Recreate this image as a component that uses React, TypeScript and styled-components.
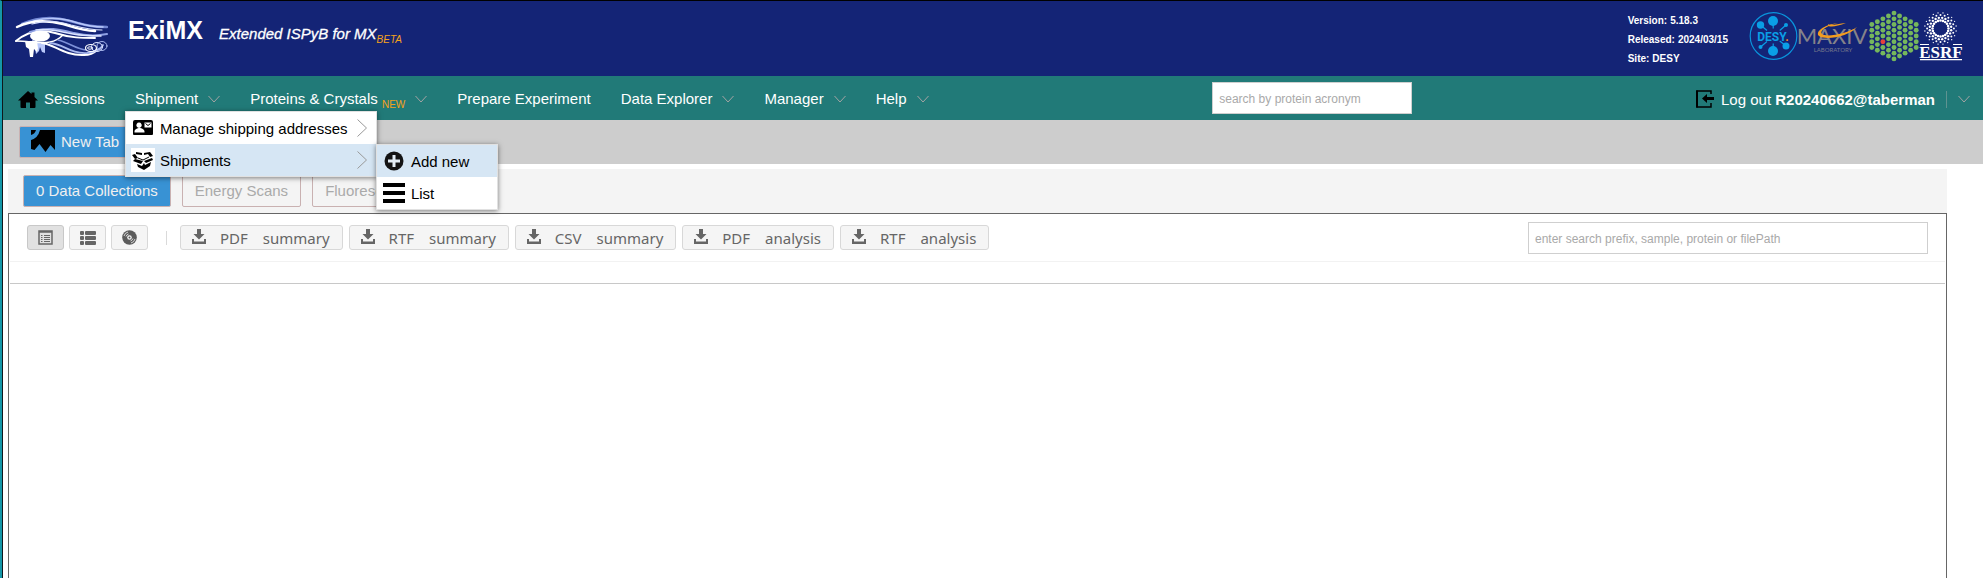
import React from "react";
import styled, { createGlobalStyle, css } from "styled-components";

const Global = createGlobalStyle`
  *, *::before, *::after { box-sizing: border-box; }
  body { margin: 0; background: #fff; }
  body, button, input { font-family: "Liberation Sans", Arial, sans-serif; font-size: 15px; }
  svg { display: block; flex: none; }
`;

const Page = styled.div`
  min-height: 100vh;
  display: flex;
  flex-direction: column;
  border-left: 2px solid #1597a8;
  border-top: 1px solid #000;
  box-shadow: inset 1px 0 #10181c;
  padding-left: 1px;
`;

const Header = styled.header`
  height: 75px;
  background: #142476;
  color: #fff;
  display: flex;
  align-items: flex-start;
  justify-content: space-between;
  padding: 8px 20px 0 9px;
`;

const Brand = styled.div`
  display: flex;
  align-items: flex-start;
`;

const Title = styled.h1`
  margin: 7px 0 0 20px;
  font-size: 25px;
  line-height: 29px;
`;

const Tagline = styled.p`
  margin: 15px 0 0 16px;
  font-style: italic;
  line-height: 20px;
  -webkit-text-stroke: 0.3px #fff;
`;

const Flag = styled.sub`
  font-size: 10px;
  line-height: 0;
  color: #f5a21b;
  -webkit-text-stroke: 0;
`;

const HeaderInfo = styled.div`
  display: flex;
`;

const Release = styled.dl`
  margin: 2px 21px 0 0;
  font-size: 10px;
  font-weight: bold;
  line-height: 19px;
  div { display: flex; gap: 3px; }
  dd { margin: 0; }
`;

const Nav = styled.nav`
  height: 44px;
  background: #217a78;
  color: #fff;
  display: flex;
  align-items: center;
  justify-content: space-between;
  padding: 0 13px 0 15px;
`;

const NavList = styled.ul`
  display: flex;
  gap: 30px;
  list-style: none;
  margin: 0;
  padding: 2px 0 0;
`;

const NavItem = styled.li`
  position: relative;
`;

const plain = css`
  border: 0;
  padding: 0;
  background: none;
  color: inherit;
  cursor: pointer;
`;

const NavButton = styled.button`
  ${plain}
  display: flex;
  align-items: center;
  gap: 10px;
  line-height: 20px;
  white-space: nowrap;
`;

const HomeLink = styled.a`
  display: flex;
  align-items: center;
  gap: 6px;
  color: inherit;
  text-decoration: none;
  line-height: 20px;
`;

const Menu = styled.ul<{ $sub?: boolean }>`
  position: absolute;
  z-index: 2;
  top: ${(p) => (p.$sub ? "0" : "22px")};
  left: ${(p) => (p.$sub ? "100%" : "-10px")};
  width: ${(p) => (p.$sub ? "122px" : "252px")};
  margin: 0;
  padding: 0;
  list-style: none;
  background: #fff;
  color: #000;
  border: 1px solid #e1e1e1;
  box-shadow: 0 1px 5px rgba(0, 0, 0, 0.5);
`;

const MenuItem = styled.li`
  position: relative;
`;

const MenuButton = styled.button<{ $active?: boolean }>`
  ${plain}
  width: 100%;
  height: 32px;
  display: flex;
  align-items: center;
  gap: 5px;
  padding: 0 8px 0 5px;
  background: ${(p) => (p.$active ? "#d6e6f4" : "#fff")};
  white-space: nowrap;
  > :nth-child(3) { margin-left: auto; }
`;

const Field = styled.input<{ $wide?: boolean }>`
  width: ${(p) => (p.$wide ? "400px" : "200px")};
  height: 32px;
  padding: 2px 6px 0;
  border: 1px solid #cfcfcf;
  border-radius: 0;
  font-size: 12px;
  &::placeholder { color: #a9a9a9; opacity: 1; }
`;

const Account = styled.div`
  display: flex;
  align-items: center;
  gap: 11px;
  padding-top: 2px;
`;

const LogoutButton = styled.button`
  ${plain}
  display: flex;
  align-items: center;
  gap: 7px;
`;

const Divider = styled.span<{ $light?: boolean }>`
  width: 1px;
  height: ${(p) => (p.$light ? "14px" : "17px")};
  margin: ${(p) => (p.$light ? "0 8px 0 13px" : "0")};
  background: ${(p) => (p.$light ? "#dadada" : "#5f9391")};
`;

const TabBar = styled.div`
  height: 44px;
  background: #cdcdcd;
  padding: 6px 16px;
`;

const Tab = styled.button<{ $kind: "workspace" | "active" | "muted" }>`
  height: 32px;
  display: flex;
  align-items: center;
  gap: 5px;
  border: 1px solid #c9b1b1;
  border-radius: 2px;
  padding: ${(p) => (p.$kind === "workspace" ? "0 10px 2px" : "0 12px 2px")};
  background: ${(p) => (p.$kind === "muted" ? "#f4f4f4" : "#3892d4")};
  color: ${(p) => (p.$kind === "muted" ? "#aaa" : "#f0f0f0")};
  white-space: nowrap;
`;

const Main = styled.main`
  flex: 1;
  display: flex;
  flex-direction: column;
  margin: 5px 36px 0 5px;
`;

const ResultTabs = styled.div`
  height: 44px;
  background: #f4f4f4;
  display: flex;
  gap: 11px;
  padding: 6px 15px;
`;

const Panel = styled.section`
  flex: 1;
  border: 1px solid #666;
  border-bottom: 0;
  padding: 0 1px;
`;

const Toolbar = styled.div`
  height: 48px;
  display: flex;
  justify-content: space-between;
  border-bottom: 1px solid #f2f2f2;
  padding: 8px 17px 0;
`;

const Tools = styled.div`
  display: flex;
  align-items: center;
  height: 31px;
  gap: 5px;
`;

const ToolButton = styled.button<{ $square?: boolean; $pressed?: boolean }>`
  height: 25px;
  display: flex;
  align-items: center;
  justify-content: center;
  gap: 15px;
  min-width: ${(p) => (p.$square ? "37px" : "0")};
  padding: ${(p) => (p.$square ? "0" : "0 12px 0 10px")};
  border: 1px solid ${(p) => (p.$pressed ? "#c8c8c8" : "#d8d8d8")};
  border-radius: 3px;
  background: ${(p) => (p.$pressed ? "#e1e1e1" : "#f5f5f5")};
  color: #666;
  font-family: "Noto Sans", sans-serif;
  line-height: 22px;
  white-space: nowrap;
`;

const Exports = styled.div`
  display: flex;
  gap: 6px;
  svg { margin: 0 -2px 2px 0; }
`;

const GridHead = styled.div`
  height: 22px;
  border-bottom: 1px solid #c8c8c8;
`;

const Chevron = () => (
  <svg width="12" height="8" viewBox="0 0 12 8" fill="none" stroke="#a3a3a3" strokeWidth="1">
    <path d="M.5 1 6 7l5.500-6" />
  </svg>
);

const Arrow = () => (
  <svg width="12" height="18" viewBox="0 0 12 18" fill="none" stroke="#999">
    <path d="M1.500.5 10.500 9l-9 8.500" />
  </svg>
);

const EyeLogo = () => (
  <svg width="96" height="50" viewBox="0 0 96 50" fill="none" strokeLinecap="round">
    <path d="M20 31l3 8 1 6 3-3 1-4 2 5 3 1V34z" fill="#b9c8fa" />
    <path d="M13 32l1 6 3 2 1 8h3l1-8 3 3 1-4-1-7z" fill="#fff" />
    <path d="M10 15C28 7 44 8 58 12s22 6 37 6" stroke="#7488d4" strokeWidth="2.500" />
    <path d="M22 12c18-5 32-2 44 2 10 3 17 4 25 4" stroke="#b9c8fa" strokeWidth="1.500" />
    <path d="M5 18C19 11 36 11 51 15c13 4 20 7 32 7" stroke="#fff" strokeWidth="2.500" />
    <path d="M20 15C34 11 45 12 59 16c12 3 20 5 31 5" stroke="#dbe3ff" strokeWidth="1.200" />
    <path d="M4 32C16 22 30 20 43 24c16 5 27 5 40 5" stroke="#fff" strokeWidth="2" />
    <path d="M18 23c18-6 32-2 44 1 12 3 23 3 33 1" stroke="#8fa1e4" strokeWidth="2" />
    <path d="M24 21c15-2 25 2 37 4 11 2 18 2 28 2" stroke="#dbe3ff" strokeWidth="1.500" />
    <path d="M4 32c14 0 22 3 34 1 6-1 10-4 13-7" stroke="#fff" strokeWidth="1.500" />
    <ellipse cx="28" cy="27" rx="10" ry="5.500" fill="#fff" />
    <path d="M30 34c12 1 22 13 42 12 6 0 10-2 13-5" stroke="#fff" strokeWidth="2" />
    <path d="M38 34c14 1 20 11 37 10 8-1 14-4 16-8" stroke="#a9b8ee" strokeWidth="1.800" />
    <path d="M46 31c12 3 18 9 28 10" stroke="#7d90d8" strokeWidth="1.500" />
    <ellipse cx="79" cy="39" rx="5.500" ry="3.500" stroke="#fff" strokeWidth="1.200" />
    <ellipse cx="78" cy="39" rx="2.500" ry="1.200" stroke="#fff" />
    <ellipse cx="85" cy="38" rx="5.500" ry="4.500" stroke="#dbe3ff" />
    <ellipse cx="90" cy="37" rx="5" ry="4.500" stroke="#a9b8ee" />
  </svg>
);

const desySpokes = [
  [24, 9, 5], [11.500, 13, 3.700], [37, 13, 2], [11.500, 35, 2], [37, 34, 3.500], [24, 39, 5],
];

const DesyLogo = () => (
  <svg width="49" height="56" viewBox="0 -3 49 56">
    <circle cx="24.500" cy="24" r="23.300" fill="none" stroke="#0a94dc" strokeWidth="1.200" />
    {desySpokes.map(([x, y, r]) => (
      <g key={`${x}-${y}`}>
        <path d={`M${x} ${y}L${24.5 + (x - 24.5) * 0.5} ${24 + (y - 24) * 0.5}`} stroke="#0a9fe6" strokeWidth="1.200" />
        <circle cx={x} cy={y} r={r} fill="#0a9fe6" />
      </g>
    ))}
    <text x="24" y="28.500" textAnchor="middle" fontFamily="Roboto, sans-serif" fontWeight="700" fontSize="12" fill="#0a9fe6">
      DESY<tspan fill="#f28e1c">.</tspan>
    </text>
  </svg>
);

const MaxIvLogo = () => (
  <svg width="71" height="56" viewBox="0 0 71 56">
    <text x="34" y="35" textAnchor="middle" fontFamily="Lato, sans-serif" fontWeight="400" fontSize="22" fill="#85838a">MAXIV</text>
    <text x="35" y="43" textAnchor="middle" fontFamily="Lato, sans-serif" fontSize="6" fill="#77788c">LABORATORY</text>
    <path d="M40 14C25 16 17 23 21 27c7 5 31 0 38-9-9 6-30 11-35 7-3-3 4-8 16-11z" fill="#f39c1f" />
    <path d="M30 15c-1 4 8 3 18-1-9 1-16 3-18 1z" fill="#f39c1f" />
  </svg>
);

const hexDots = Array.from({ length: 9 }, (_, i) => i - 4).flatMap((col) => {
  const count = 9 - Math.abs(col);
  return Array.from({ length: count }, (_, row) => ({ col, row: row - (count - 1) / 2 }));
});

const HexLogo = () => (
  <svg width="50" height="56" viewBox="0 0 50 56">
    {hexDots.map(({ col, row }) => (
      <circle key={`${col}:${row}`} cx={25 + col * 5.55} cy={27 + row * 5.72} r="2.450" fill={col === -2 && row === 1 ? "#e8413c" : "#76b75c"} />
    ))}
  </svg>
);

const rays = Array.from({ length: 20 }, (_, i) => (i * Math.PI) / 10);
const rings = [[8, 1.3], [10.8, 1.2], [13.400, 1], [15.800, 0.7]];

const EsrfLogo = () => (
  <svg width="44" height="56" viewBox="0 0 44 56" fill="#fff">
    {rings.flatMap(([radius, size], ring) =>
      rays.map((a) => {
        const angle = a + (ring % 2 ? Math.PI / 20 : 0);
        return <circle key={`${ring}:${a}`} cx={21.5 + Math.cos(angle) * radius} cy={19.5 + Math.sin(angle) * radius} r={size} />;
      })
    )}
    <path d="M1 35h9v1H1zM34 35h9v1h-9zM1 50h42v1.200H1z" />
    <text x="22" y="49" textAnchor="middle" fontFamily="Liberation Serif, serif" fontWeight="700" fontSize="17">ESRF</text>
  </svg>
);

const HomeIcon = () => (
  <svg width="20" height="17" viewBox="0 0 20 17">
    <path d="M10 0l3.500 3V1.500h3V6L20 9.500h-2.500V16q0 1-1 1H12v-5.500H8V17H3.500q-1 0-1-1V9.500H0z" />
  </svg>
);

const LogoutIcon = () => (
  <svg width="18" height="18" viewBox="0 0 18 18" fill="none" stroke="#000" strokeWidth="1.500">
    <path d="M15 4V1H1v16h14v-4" />
    <path d="M1 .5v17" strokeWidth="2" />
    <path d="M6 8.500l5-4.500v3h7v3h-7v3z" fill="#000" stroke="none" />
  </svg>
);

const CardIcon = () => (
  <svg width="24" height="24" viewBox="0 0 24 24">
    <path fillRule="evenodd" d="M4 4h16q2 0 2 2v12q0 1-1 1H3q-1 0-1-1V6q0-2 2-2zM8 6.500a2.700 2.700 0 1 0 .1 0zM3.500 16.500h10v-1c0-2-3-3.500-5-3.500s-5 1.500-5 3.500zM13.500 6.500v5h7v-5z" />
    <path d="M14.500 7.500l2.500 2 2.500-2" fill="none" stroke="#000" />
  </svg>
);

const BoxIcon = () => (
  <svg width="24" height="24" viewBox="0 0 24 24">
    <path fill="#fff" d="M0 0h24v24H0z" />
    <path d="M5 4l6 1v2L5 6zM13 5l6-1 3 4-3 1-2-3-4 1zM1 7l3-1 3 4-3 1zM4 11l8 2-2 3-8-3zM13 13l8-3 1 2-7 3zM6 16l5 2 2-3 1 2 6-3-1 4-6 4-6-3z" />
    <path d="M7 10l5 2 6-3" fill="none" stroke="#000" />
  </svg>
);

const AddIcon = () => (
  <svg width="24" height="24" viewBox="0 0 24 24">
    <circle cx="12" cy="12" r="9.500" fill="#141414" />
    <path d="M12 6v12M6 12h12" stroke="#e4edf5" strokeWidth="3" />
  </svg>
);

const ListIcon = () => (
  <svg width="24" height="24" viewBox="0 0 24 24">
    <path d="M1 2h22v4H1zM1 10h22v4H1zM1 18h22v4H1z" />
  </svg>
);

const TabIcon = () => (
  <svg width="26" height="22" viewBox="0 0 26 22">
    <path d="M1 0h5Q5 4 1 5zM10 0h15v20l-4.500-5-5 7-6-8-5 6L1 19v-9Q8 8 10 0z" />
  </svg>
);

const TableIcon = () => (
  <svg width="15" height="15" viewBox="0 0 15 15" fill="none" stroke="#666">
    <path d="M1 1h13v13H1zM1 2h13" strokeWidth="1.500" />
    <path d="M3 5.500h1.500M6 5.500h6M3 7.500h1.500M6 7.500h6M3 9.500h1.500M6 9.500h6M3 11.500h1.500M6 11.500h6" />
  </svg>
);

const RowsIcon = () => (
  <svg width="16" height="14" viewBox="0 0 16 14" fill="#666">
    <rect width="4" height="4" rx="1" /><rect x="5" width="11" height="4" rx="1" />
    <rect y="5" width="4" height="4" rx="1" /><rect x="5" y="5" width="11" height="4" rx="1" />
    <rect y="10" width="4" height="4" rx="1" /><rect x="5" y="10" width="11" height="4" rx="1" />
  </svg>
);

const DiscIcon = () => (
  <svg width="15" height="15" viewBox="0 0 15 15">
    <circle cx="7.500" cy="7.500" r="7.300" fill="#5c5c5c" />
    <g fill="none" stroke="#f5f5f5" strokeWidth=".8">
      <path d="M2 6A5.500 5.500 0 0 1 6 2M4 6.500A3.800 3.800 0 0 1 6.500 4M13 9A5.500 5.500 0 0 1 9 13M11 8.500A3.800 3.800 0 0 1 8.500 11" />
    </g>
    <circle cx="7.500" cy="7.500" r="2.300" fill="#f5f5f5" />
    <circle cx="7.500" cy="7.500" r="1" fill="#5c5c5c" />
  </svg>
);

const DownloadIcon = () => (
  <svg width="16" height="18" viewBox="0 0 16 18" fill="#666">
    <path d="M6 1h4v5h3.500L8 11.500 2.500 6H6z" />
    <path d="M1 11h2v2.500h10V11h2v5H1z" />
  </svg>
);

const exportsList = [
  ["PDF", "summary"],
  ["RTF", "summary"],
  ["CSV", "summary"],
  ["PDF", "analysis"],
  ["RTF", "analysis"],
];

export default function App() {
  return (
    <Page>
      <Global />
      <Header>
        <Brand>
          <EyeLogo />
          <Title>ExiMX</Title>
          <Tagline>Extended ISPyB for MX<Flag>BETA</Flag></Tagline>
        </Brand>
        <HeaderInfo>
          <Release>
            <div><dt>Version:</dt><dd>5.18.3</dd></div>
            <div><dt>Released:</dt><dd>2024/03/15</dd></div>
            <div><dt>Site:</dt><dd>DESY</dd></div>
          </Release>
          <DesyLogo />
          <MaxIvLogo />
          <HexLogo />
          <EsrfLogo />
        </HeaderInfo>
      </Header>
      <Nav>
        <NavList>
          <NavItem><HomeLink href="#sessions"><HomeIcon />Sessions</HomeLink></NavItem>
          <NavItem>
            <NavButton aria-expanded="true">Shipment<Chevron /></NavButton>
            <Menu>
              <MenuItem>
                <MenuButton><CardIcon /><span>Manage shipping addresses</span><Arrow /></MenuButton>
              </MenuItem>
              <MenuItem>
                <MenuButton $active aria-expanded="true"><BoxIcon /><span>Shipments</span><Arrow /></MenuButton>
                <Menu $sub>
                  <MenuItem><MenuButton $active><AddIcon /><span>Add new</span></MenuButton></MenuItem>
                  <MenuItem><MenuButton><ListIcon /><span>List</span></MenuButton></MenuItem>
                </Menu>
              </MenuItem>
            </Menu>
          </NavItem>
          <NavItem><NavButton><span>Proteins &amp; Crystals <Flag>NEW</Flag></span><Chevron /></NavButton></NavItem>
          <NavItem><NavButton>Prepare Experiment</NavButton></NavItem>
          <NavItem><NavButton>Data Explorer<Chevron /></NavButton></NavItem>
          <NavItem><NavButton>Manager<Chevron /></NavButton></NavItem>
          <NavItem><NavButton>Help<Chevron /></NavButton></NavItem>
        </NavList>
        <Field type="text" aria-label="Search by protein acronym" placeholder="search by protein acronym" />
        <Account>
          <LogoutButton><LogoutIcon /><span>Log out <b>R20240662@taberman</b></span></LogoutButton>
          <Divider />
          <Chevron />
        </Account>
      </Nav>
      <TabBar>
        <Tab $kind="workspace"><TabIcon />New Tab</Tab>
      </TabBar>
      <Main>
        <ResultTabs>
          <Tab $kind="active">0 Data Collections</Tab>
          <Tab $kind="muted">Energy Scans</Tab>
          <Tab $kind="muted">Fluorescence Spectra</Tab>
        </ResultTabs>
        <Panel>
          <Toolbar>
            <Tools>
              <ToolButton $square $pressed aria-label="Table view"><TableIcon /></ToolButton>
              <ToolButton $square aria-label="List view"><RowsIcon /></ToolButton>
              <ToolButton $square aria-label="Disc view"><DiscIcon /></ToolButton>
              <Divider $light />
              <Exports>
                {exportsList.map(([format, kind]) => (
                  <ToolButton key={format + kind}><DownloadIcon /><span>{format}</span><span>{kind}</span></ToolButton>
                ))}
              </Exports>
            </Tools>
            <Field $wide type="text" aria-label="Search data collections" placeholder="enter search prefix, sample, protein or filePath" />
          </Toolbar>
          <GridHead />
        </Panel>
      </Main>
    </Page>
  );
}
